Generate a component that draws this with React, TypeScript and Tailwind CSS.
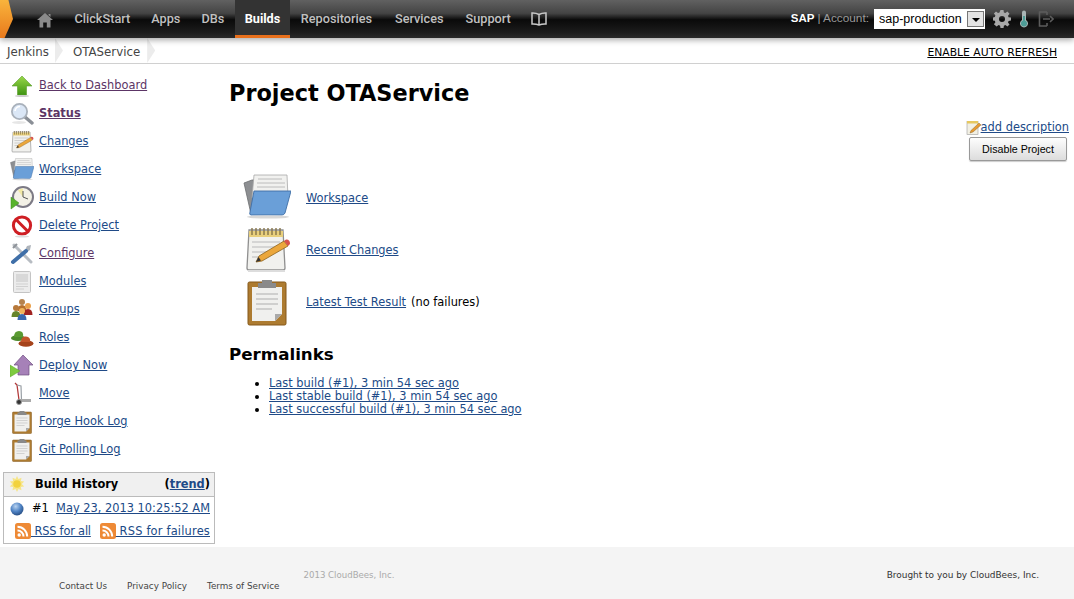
import React from 'react';

const verdana = { fontFamily: '"DejaVu Sans", Verdana, sans-serif' };

type IconProps = { size?: number; className?: string };

const UpArrow = ({ size = 24 }: IconProps) => (
  <svg width={size} height={size} viewBox="0 0 24 24">
    <defs>
      <linearGradient id="upg" x1="0" y1="0" x2="0" y2="1">
        <stop offset="0" stopColor="#9ad84a" />
        <stop offset="1" stopColor="#3f9412" />
      </linearGradient>
    </defs>
    <path d="M12 2 L22 12 H16.5 V21 H7.5 V12 H2 Z" fill="url(#upg)" stroke="#5d9e2b" strokeWidth="0.6" />
    <ellipse cx="12" cy="22" rx="7" ry="1" fill="#ccc" />
  </svg>
);

const Magnifier = ({ size = 24 }: IconProps) => (
  <svg width={size} height={size} viewBox="0 0 24 24">
    <line x1="15" y1="15" x2="22" y2="21" stroke="#8a8f96" strokeWidth="3.4" strokeLinecap="round" />
    <circle cx="9.5" cy="9.5" r="7.6" fill="#dbe7f6" stroke="#a9b1bb" strokeWidth="1.8" />
    <path d="M5 9 A5 5 0 0 1 10 4.5" stroke="#fff" strokeWidth="1.6" fill="none" />
    <ellipse cx="9" cy="20.5" rx="7" ry="1.5" fill="#e6e6e6" />
  </svg>
);

const Notepad = ({ size = 24 }: IconProps) => (
  <svg width={size} height={size} viewBox="0 0 48 48">
    <path d="M6 4 H40 L42 42 Q42 44 40 44 H6 Q4 44 4 42 Z" fill="#f1f1ee" stroke="#8f8f8f" strokeWidth="1.3" />
    <path d="M6 5 H40 V11 H6 Z" fill="#e8cf7c" />
    <path d="M9 2v7M13 2v7M17 2v7M21 2v7M25 2v7M29 2v7M33 2v7M37 2v7" stroke="#85744a" strokeWidth="1.4" />
    <path d="M9 16h28M9 21h28M9 26h20M9 31h13" stroke="#b9b9b9" strokeWidth="1.2" />
    <path d="M13 36 L16 30 L41 15 L45 20 L19 35 Z" fill="#eba73c" stroke="#8d6320" strokeWidth="0.8" />
    <path d="M41 15 L45 20 L47 18 Q47 13 43 13.500 Z" fill="#d8534c" />
    <path d="M13 36 L15.500 31 L18 34.500 Z" fill="#333" />
    <rect x="5" y="44" width="37" height="2" fill="#ddd" />
  </svg>
);

const Folder = ({ size = 24 }: IconProps) => (
  <svg width={size} height={size} viewBox="0 0 48 48">
    <path d="M1 9 L9 6 H18 V40 H8 Z" fill="#8d8f92" stroke="#6b6d70" strokeWidth="0.8" />
    <path d="M11 1 H44 L45 24 H9 Z" fill="#f1f1ef" stroke="#a8a8a8" strokeWidth="0.8" />
    <path d="M15 5h24M14 9h28M14 13h28" stroke="#bcbcbc" strokeWidth="1" />
    <path d="M11 17 H48 L42 39 Q41 41 39 41 H8 Q6 41 7 38 Z" fill="#6a9fd8" stroke="#3f6ea6" strokeWidth="0.9" />
    <ellipse cx="25" cy="43" rx="21" ry="1.600" fill="#d8d8d8" />
  </svg>
);

const Clock = ({ size = 24 }: IconProps) => (
  <svg width={size} height={size} viewBox="0 0 24 24">
    <circle cx="13" cy="11" r="10" fill="#f3f1e6" stroke="#7c7a85" strokeWidth="2" />
    <path d="M13 11 L8 4.5 A9 9 0 0 1 13 2.5 Z" fill="#f2e9a6" />
    <path d="M13 5v6l5 2" stroke="#555" strokeWidth="1" fill="none" />
    <path d="M1 11 L9 17 L1 23 Z" fill="#58b32c" stroke="#3f8d1f" strokeWidth="0.5" />
  </svg>
);

const NoEntry = ({ size = 24 }: IconProps) => (
  <svg width={size} height={size} viewBox="0 0 24 24">
    <circle cx="12" cy="11.5" r="8.6" fill="#fff" stroke="#cf1f24" strokeWidth="3" />
    <line x1="6" y1="5.5" x2="18" y2="17.5" stroke="#cf1f24" strokeWidth="3" />
    <ellipse cx="12" cy="22.5" rx="7" ry="1" fill="#ddd" />
  </svg>
);

const Tools = ({ size = 24 }: IconProps) => (
  <svg width={size} height={size} viewBox="0 0 24 24">
    <path d="M4 3 L21 20" stroke="#b7bcc2" strokeWidth="3" strokeLinecap="round" />
    <path d="M3 6 L7 2" stroke="#8f949a" strokeWidth="2.2" />
    <path d="M21 3 L17 4 L15 8 L17 10 L20 8 Z" fill="#aeb4bb" />
    <path d="M16 9 L3 20" stroke="#3f6fa8" strokeWidth="4" strokeLinecap="round" />
  </svg>
);

const Page = ({ size = 24 }: IconProps) => (
  <svg width={size} height={size} viewBox="0 0 24 24">
    <rect x="3.5" y="1.5" width="17" height="21" rx="1" fill="#ececec" stroke="#c4c4c4" />
    <rect x="6" y="4" width="12" height="8" fill="#d8d8d8" />
    <path d="M6 14h12M6 16.5h12M6 19h8" stroke="#d0d0d0" strokeWidth="1" />
  </svg>
);

const Person = ({ x, y, c, h = '#c98a45' }: { x: number; y: number; c: string; h?: string }) => (
  <g>
    <path d={`M${x - 4.5} ${y + 9} Q${x - 4.5} ${y + 3} ${x} ${y + 3} Q${x + 4.5} ${y + 3} ${x + 4.5} ${y + 9} Z`} fill={c} />
    <circle cx={x} cy={y} r="3" fill={h} />
  </g>
);

const Groups = ({ size = 24 }: IconProps) => (
  <svg width={size} height={size} viewBox="0 0 24 24">
    <Person x={12} y={4} c="#b5702e" h="#b5824d" />
    <Person x={6} y={10} c="#66842a" h="#b7793b" />
    <Person x={18} y={8} c="#a12321" h="#eaa04a" />
    <Person x={12} y={13} c="#3a68b0" h="#f0b35c" />
  </svg>
);

const Roles = ({ size = 24 }: IconProps) => (
  <svg width={size} height={size} viewBox="0 0 24 24">
    <ellipse cx="8" cy="12" rx="7" ry="3" fill="#4d8a2c" />
    <path d="M4 11 Q4 5 9 5 Q14 5 13 11 Z" fill="#5a9a32" />
    <ellipse cx="16" cy="17.5" rx="7.5" ry="3.2" fill="#a5431c" />
    <path d="M11 16 Q11 10 16 10.5 Q21 11 20 16 Z" fill="#c2552a" />
  </svg>
);

const DeployNow = ({ size = 24 }: IconProps) => (
  <svg width={size} height={size} viewBox="0 0 24 24">
    <path d="M13 1 L23 11 H19 V21 H8 V11 H4 Z" fill="#a681b8" stroke="#6f4e7f" strokeWidth="0.7" />
    <path d="M0 11 L10 17 L0 23 Z" fill="#7ecb3f" stroke="#5aa02a" strokeWidth="0.5" />
  </svg>
);

const Dolly = ({ size = 24 }: IconProps) => (
  <svg width={size} height={size} viewBox="0 0 24 24">
    <path d="M5 1 L7 3 L9 18" stroke="#b33a3a" strokeWidth="1.3" fill="none" />
    <path d="M7 3 L11 4 L11.5 18" stroke="#9aa0a6" strokeWidth="1.2" fill="none" />
    <rect x="10" y="17" width="11" height="3" fill="#aaa" />
    <circle cx="9" cy="20" r="2.5" fill="#333" stroke="#999" />
  </svg>
);

const Clipboard = ({ size = 24 }: IconProps) => (
  <svg width={size} height={size} viewBox="0 0 48 48">
    <rect x="5" y="4" width="38" height="43" rx="1.5" fill="#ad7b30" stroke="#85591a" />
    <path d="M9 9 H39 V36 L32 43 H9 Z" fill="#f0f0ee" />
    <path d="M32 43 L39 36 H32 Z" fill="#a9a9a9" />
    <path d="M13 16h22M13 21h22M13 26h22M13 31h16" stroke="#c4c4c4" strokeWidth="1.4" />
    <path d="M15 10 V5 H19 V2 H29 V5 H33 V10 Z" fill="#8a8a8a" />
  </svg>
);

const Sun = ({ size = 16 }: IconProps) => (
  <svg width={size} height={size} viewBox="0 0 16 16">
    <path d="M8 0l1.5 3 3-1.2-.6 3.2 3.3.6-2.4 2.4 2.4 2.4-3.3.6.6 3.2-3-1.2L8 16l-1.5-3-3 1.2.6-3.2-3.3-.6 2.4-2.4L.8 5.600l3.300-.6-.6-3.200 3 1.200Z" fill="#f6e58a" />
    <circle cx="8" cy="8" r="3.800" fill="#f2d23e" />
  </svg>
);

const Ball = () => (
  <svg width="14" height="14" viewBox="0 0 14 14">
    <defs>
      <radialGradient id="ballg" cx="0.4" cy="0.3" r="0.8">
        <stop offset="0" stopColor="#b9d3f0" />
        <stop offset="0.5" stopColor="#4f83c4" />
        <stop offset="1" stopColor="#1c3f72" />
      </radialGradient>
    </defs>
    <circle cx="7" cy="7" r="6.500" fill="url(#ballg)" />
  </svg>
);

const Rss = () => (
  <svg width="16" height="16" viewBox="0 0 16 16" className="shrink-0">
    <rect width="16" height="16" rx="2.500" fill="#ee8a36" />
    <circle cx="4.200" cy="12" r="1.700" fill="#fff" />
    <path d="M2.500 7.500a6 6 0 0 1 6 6M2.500 3.800a9.700 9.700 0 0 1 9.700 9.700" stroke="#fff" strokeWidth="2" fill="none" />
  </svg>
);

const Home = () => (
  <svg width="16" height="16" viewBox="0 0 16 16">
    <path d="M8 1 L16 8 H13.500 V15.500 H9.800 V10.500 H6.200 V15.500 H2.500 V8 H0 Z" fill="#8b8b8b" />
    <path d="M11.500 2 H13.500 V5 L11.500 3.300 Z" fill="#8b8b8b" />
  </svg>
);

const Book = () => (
  <svg width="16" height="14" viewBox="0 0 16 14" fill="none" stroke="#c9c9c9" strokeWidth="1.500">
    <path d="M8 2.500 Q5 0.800 1 1 V12 Q5 11.800 8 13 Q11 11.800 15 12 V1 Q11 0.800 8 2.500 Z M8 2.500 V13" />
  </svg>
);

const Gear = () => (
  <svg width="18" height="18" viewBox="0 0 18 18">
    <path
      d="M7.500 0h3l.4 2.500 1.500.6 2-1.500 2.100 2.100-1.500 2 .6 1.500 2.400.4v3l-2.400.4-.6 1.500 1.500 2-2.100 2.100-2-1.500-1.500.6-.4 2.500h-3l-.4-2.500-1.500-.6-2 1.500L.9 14.300l1.500-2-.6-1.500L0 10.500v-3l1.800-.4.600-1.500-1.500-2L3 1.500l2 1.500 1.500-.6Z M9 6a3 3 0 1 0 0 6 3 3 0 0 0 0-6Z"
      fill="#a8a8a8"
      fillRule="evenodd"
    />
  </svg>
);

const Thermometer = () => (
  <svg width="10" height="18" viewBox="0 0 10 18">
    <path d="M3 2.500a2 2 0 0 1 4 0V10a4 4 0 1 1-4 0Z" fill="#a9b5b5" />
    <circle cx="5" cy="13.500" r="3" fill="#4d9c96" />
    <rect x="4" y="6" width="2" height="6" fill="#4d9c96" />
  </svg>
);

const Logout = () => (
  <svg width="16" height="16" viewBox="0 0 16 16" fill="none" stroke="#5c5c5c" strokeWidth="1.600">
    <path d="M9 1 H1.500 V15 H9 M9 1 V4 M9 12 V15" />
    <path d="M5 8 H12 M12 5 L15 8 L12 11" />
  </svg>
);

const Pencil = () => (
  <svg width="15" height="15" viewBox="0 0 15 15">
    <rect x="1" y="1.500" width="11" height="13" fill="#f2f0e4" stroke="#9b9b9b" strokeWidth="0.600" />
    <rect x="1" y="1" width="11" height="2.500" fill="#e6c860" />
    <path d="M4 13 L5 10.500 L13 3 L15 5 L7 12 Z" fill="#e79b32" stroke="#7a5518" strokeWidth="0.400" />
  </svg>
);

const sideItems: { label: string; icon: React.ReactNode; visited?: boolean; bold?: boolean }[] = [
  { label: 'Back to Dashboard', icon: <UpArrow />, visited: true },
  { label: 'Status', icon: <Magnifier />, visited: true, bold: true },
  { label: 'Changes', icon: <Notepad /> },
  { label: 'Workspace', icon: <Folder /> },
  { label: 'Build Now', icon: <Clock /> },
  { label: 'Delete Project', icon: <NoEntry /> },
  { label: 'Configure', icon: <Tools />, visited: true },
  { label: 'Modules', icon: <Page /> },
  { label: 'Groups', icon: <Groups /> },
  { label: 'Roles', icon: <Roles /> },
  { label: 'Deploy Now', icon: <DeployNow /> },
  { label: 'Move', icon: <Dolly /> },
  { label: 'Forge Hook Log', icon: <Clipboard /> },
  { label: 'Git Polling Log', icon: <Clipboard /> },
];

const navItems = [
  { label: 'ClickStart', extra: '' },
  { label: 'Apps', extra: '' },
  { label: 'DBs', extra: '' },
  { label: 'Builds', extra: '' },
  { label: 'Repositories', extra: '' },
  { label: 'Services', extra: 'ml-[2px]' },
  { label: 'Support', extra: 'ml-[1px]' },
];

const permalinks = [
  'Last build (#1), 3 min 54 sec ago',
  'Last stable build (#1), 3 min 54 sec ago',
  'Last successful build (#1), 3 min 54 sec ago',
];

const Header = () => (
  <header
    className="relative z-10 flex h-[38px] shrink-0 items-stretch bg-[linear-gradient(#616161_0%,#444_35%,#0a0a0a_52%,#1c1c1c_85%,#2a2a2a_100%)] shadow-[0_2px_6px_rgba(0,0,0,0.35)]"
    style={{ fontFamily: 'Roboto, "Liberation Sans", sans-serif' }}
  >
    <div className="h-full w-[13px] shrink-0 bg-[linear-gradient(#f9b43c,#e8791c)] [clip-path:polygon(0_0,65%_0,100%_50%,35%_100%,0_100%)]" />
    <div className="ml-[24px] flex items-center pt-[1px]">
      <Home />
    </div>
    <nav className="ml-[11px] flex items-stretch text-[12.7px] font-medium text-[#c0c0c0]">
      {navItems.map(({ label, extra }) =>
        label === 'Builds' ? (
          <a key={label} className="flex items-center border-b-[3px] border-[#e8701c] bg-[#333] px-[10px] pt-[3px] font-bold text-white">
            {label}
          </a>
        ) : (
          <a key={label} className={`flex items-center px-[10.5px] ${extra}`}>
            {label}
          </a>
        ),
      )}
    </nav>
    <div className="ml-[10px] flex items-center">
      <Book />
    </div>
    <div className="ml-auto flex items-center pr-[20px] text-[12px] text-[#9a9a9a]" style={{ fontFamily: '"Liberation Sans", sans-serif' }}>
      <span className="text-[11.5px] font-bold text-white">SAP</span>
      <span className="ml-[3px] text-[11.8px]">| Account:</span>
      <div className="ml-[5px] flex h-[20px] w-[111px] items-center justify-between bg-white pl-[5px] pr-[1px] text-[12.500px] text-black">
        <span>sap-production</span>
        <span className="flex h-[16px] w-[17px] items-center justify-center border border-[#777] bg-[#e4e4e4]">
          <span className="mt-[2px] h-0 w-0 border-x-[4px] border-t-[4px] border-x-transparent border-t-black" />
        </span>
      </div>
      <div className="ml-[8px] flex items-center gap-[8px]">
        <Gear />
        <Thermometer />
        <span className="ml-[1px]">
          <Logout />
        </span>
      </div>
    </div>
  </header>
);

const Breadcrumbs = () => (
  <div className="flex h-[26px] shrink-0 items-stretch border-b border-[#d0d0d0] text-[11.8px] text-[#444]" style={verdana}>
    <span className="flex items-center pl-[7px] pt-[5px]">Jenkins</span>
    <span className="ml-[6px] h-full w-[8px] bg-[#ececec] [clip-path:polygon(0_0,100%_50%,0_100%)]" />
    <span className="ml-[10px] flex items-center pt-[5px]">OTAService</span>
    <span className="ml-[7px] h-full w-[8px] bg-[#ececec] [clip-path:polygon(0_0,100%_50%,0_100%)]" />
    <a className="ml-auto mr-[17px] flex items-center pt-[5px] text-[10.8px] text-black underline">ENABLE AUTO REFRESH</a>
  </div>
);

const Sidebar = () => (
  <aside className="w-[229px] shrink-0 pl-[3px] pt-[8px] text-[11.4px]" style={verdana}>
    {sideItems.map((item) => (
      <div key={item.label} className="flex h-[28px] items-center pl-[7px]">
        <span className="flex h-[24px] w-[24px] shrink-0 items-center justify-center">{item.icon}</span>
        <a className={`ml-[5px] underline ${item.visited ? 'text-[#5c3566]' : 'text-[#204a87]'} ${item.bold ? 'font-bold' : ''}`}>
          {item.label}
        </a>
      </div>
    ))}
    <div className="mt-[8px] w-[212px] border border-[#bbb]">
      <div className="flex h-[24px] items-center justify-between border-b border-[#bbb] bg-[#f0f0f0] pl-[5px] pr-[4px] font-bold text-black">
        <span className="flex items-center">
          <Sun />
          <span className="ml-[10px]">Build History</span>
        </span>
        <span>
          (<a className="text-[#204a87] underline">trend</a>)
        </span>
      </div>
      <div className="flex h-[23px] items-center pl-[6px] pr-[4px] text-black">
        <Ball />
        <span className="ml-[8px]">#1</span>
        <a className="ml-auto text-[#204a87] underline">May 23, 2013 10:25:52 AM</a>
      </div>
      <div className="flex h-[23px] items-center pl-[11px] pr-[4px] text-[#204a87]">
        <a className="flex items-center whitespace-pre tracking-[-0.2px] underline">
          <Rss />
          <span> RSS for all</span>
        </a>
        <a className="ml-auto flex items-center whitespace-pre tracking-[0.2px] underline">
          <Rss />
          <span> RSS for failures</span>
        </a>
      </div>
    </div>
  </aside>
);

const mainLinks: { label: string; icon: React.ReactNode; note?: string }[] = [
  { label: 'Workspace', icon: <Folder size={48} /> },
  { label: 'Recent Changes', icon: <Notepad size={48} /> },
  { label: 'Latest Test Result', icon: <Clipboard size={48} />, note: '(no failures)' },
];

const Main = () => (
  <main className="relative flex-1 pt-[14px] text-[11.4px]" style={verdana}>
    <h1 className="text-[22.4px] font-bold leading-[30px] text-black">Project OTAService</h1>

    <div className="mt-[11px] flex flex-col items-end pr-[5px]">
      <a className="flex items-center text-[#204a87] underline">
        <Pencil />
        add description
      </a>
      <button
        className="mr-[2px] mt-[1px] h-[24px] w-[98px] rounded-[2px] border border-[#999] bg-[linear-gradient(#fdfdfd,#dcdcdc)] text-[10.7px] text-black shadow-[0_1px_1px_rgba(0,0,0,0.2)]"
        style={{ fontFamily: '"Liberation Sans", sans-serif' }}
      >
        Disable Project
      </button>
    </div>

    <div className="ml-[14px] mt-[13px] flex flex-col gap-[4px]">
      {mainLinks.map((row) => (
        <div key={row.label} className="flex h-[48px] items-center">
          {row.icon}
          <a className="ml-[15px] text-[#204a87] underline">{row.label}</a>
          {row.note && <span className="ml-[5px] text-black">{row.note}</span>}
        </div>
      ))}
    </div>

    <h2 className="mt-[17px] text-[16.7px] font-bold leading-[22px] text-black">Permalinks</h2>
    <ul className="mt-[12px] list-disc pl-[40px] leading-[13px] marker:text-black">
      {permalinks.map((link) => (
        <li key={link}>
          <a className="text-[#204a87] underline">{link}</a>
        </li>
      ))}
    </ul>
  </main>
);

const Footer = () => (
  <footer className="flex h-[52px] shrink-0 bg-[#f4f4f4] pl-[59px] pr-[35px] text-[8.8px] text-[#444]" style={verdana}>
    <div className="flex items-start gap-[20px] pt-[33px]">
      <a>Contact Us</a>
      <a>Privacy Policy</a>
      <a>Terms of Service</a>
    </div>
    <span className="ml-[24px] pt-[22px] text-[8.6px] text-[#aaa]">2013 CloudBees, Inc.</span>
    <span className="ml-auto pt-[22px] text-[8.95px] text-[#333]">Brought to you by CloudBees, Inc.</span>
  </footer>
);

export default function App() {
  return (
    <div className="flex h-[599px] w-[1074px] flex-col overflow-hidden bg-white">
      <Header />
      <Breadcrumbs />
      <div className="flex flex-1">
        <Sidebar />
        <Main />
      </div>
      <Footer />
    </div>
  );
}
